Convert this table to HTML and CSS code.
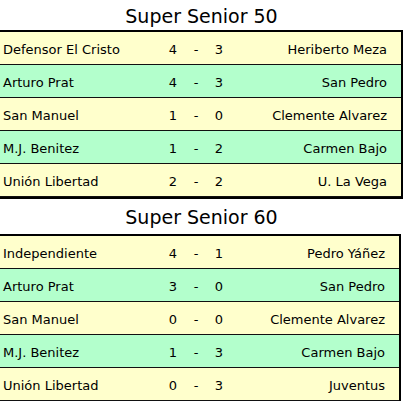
FILE: index.html
```html
<!DOCTYPE html>
<html>
<head>
<meta charset="utf-8">
<link rel="stylesheet" href="styles.css">
</head>
<body>
<div class="page">
  <h2 class="title first">Super Senior 50</h2>
  <div class="table">
    <div class="row yellow"><span class="team">Defensor El Cristo</span><span class="score">4</span><span class="dash">-</span><span class="score">3</span><span class="team right">Heriberto Meza</span></div>
    <div class="row green"><span class="team">Arturo Prat</span><span class="score">4</span><span class="dash">-</span><span class="score">3</span><span class="team right">San Pedro</span></div>
    <div class="row yellow"><span class="team">San Manuel</span><span class="score">1</span><span class="dash">-</span><span class="score">0</span><span class="team right">Clemente Alvarez</span></div>
    <div class="row green"><span class="team">M.J. Benitez</span><span class="score">1</span><span class="dash">-</span><span class="score">2</span><span class="team right">Carmen Bajo</span></div>
    <div class="row yellow"><span class="team">Unión Libertad</span><span class="score">2</span><span class="dash">-</span><span class="score">2</span><span class="team right">U. La Vega</span></div>
  </div>
  <h2 class="title second">Super Senior 60</h2>
  <div class="table narrow">
    <div class="row yellow"><span class="team">Independiente</span><span class="score">4</span><span class="dash">-</span><span class="score">1</span><span class="team right">Pedro Yáñez</span></div>
    <div class="row green"><span class="team">Arturo Prat</span><span class="score">3</span><span class="dash">-</span><span class="score">0</span><span class="team right">San Pedro</span></div>
    <div class="row yellow"><span class="team">San Manuel</span><span class="score">0</span><span class="dash">-</span><span class="score">0</span><span class="team right">Clemente Alvarez</span></div>
    <div class="row green"><span class="team">M.J. Benitez</span><span class="score">1</span><span class="dash">-</span><span class="score">3</span><span class="team right">Carmen Bajo</span></div>
    <div class="row yellow"><span class="team">Unión Libertad</span><span class="score">0</span><span class="dash">-</span><span class="score">3</span><span class="team right">Juventus</span></div>
  </div>
</div>
</body>
</html>
```

FILE: styles.css
```css
html, body {
  margin: 0;
  padding: 0;
  background: #fff;
}
.page {
  width: 403px;
  font-family: "DejaVu Sans", Verdana, sans-serif;
  color: #000;
}
.title {
  margin: 0;
  font-weight: normal;
  font-size: 19px;
  text-align: center;
  display: flex;
  align-items: center;
  justify-content: center;
  box-sizing: border-box;
}
.title.first {
  height: 30px;
  padding-top: 2px;
}
.title.second {
  height: 35px;
  padding-top: 0;
}
.table {
  width: 401px;
  border-top: 2px solid #000;
  border-bottom: 2px solid #000;
  border-right: 2px solid #000;
}
.table.narrow {
  width: 399px;
}
.row {
  display: flex;
  align-items: center;
  height: 33px;
  box-sizing: border-box;
  padding-top: 2px;
  border-bottom: 1px solid #111;
  font-size: 13px;
}
.yellow { background: #ffffcc; }
.green { background: #b3ffcc; }
.team {
  width: 157px;
  padding-left: 3px;
  white-space: nowrap;
}
.score {
  width: 26px;
  text-align: center;
}
.dash {
  width: 20px;
  text-align: center;
}
.team.right {
  flex: 1;
  width: auto;
  padding-left: 0;
  padding-right: 14px;
  text-align: right;
}
```
